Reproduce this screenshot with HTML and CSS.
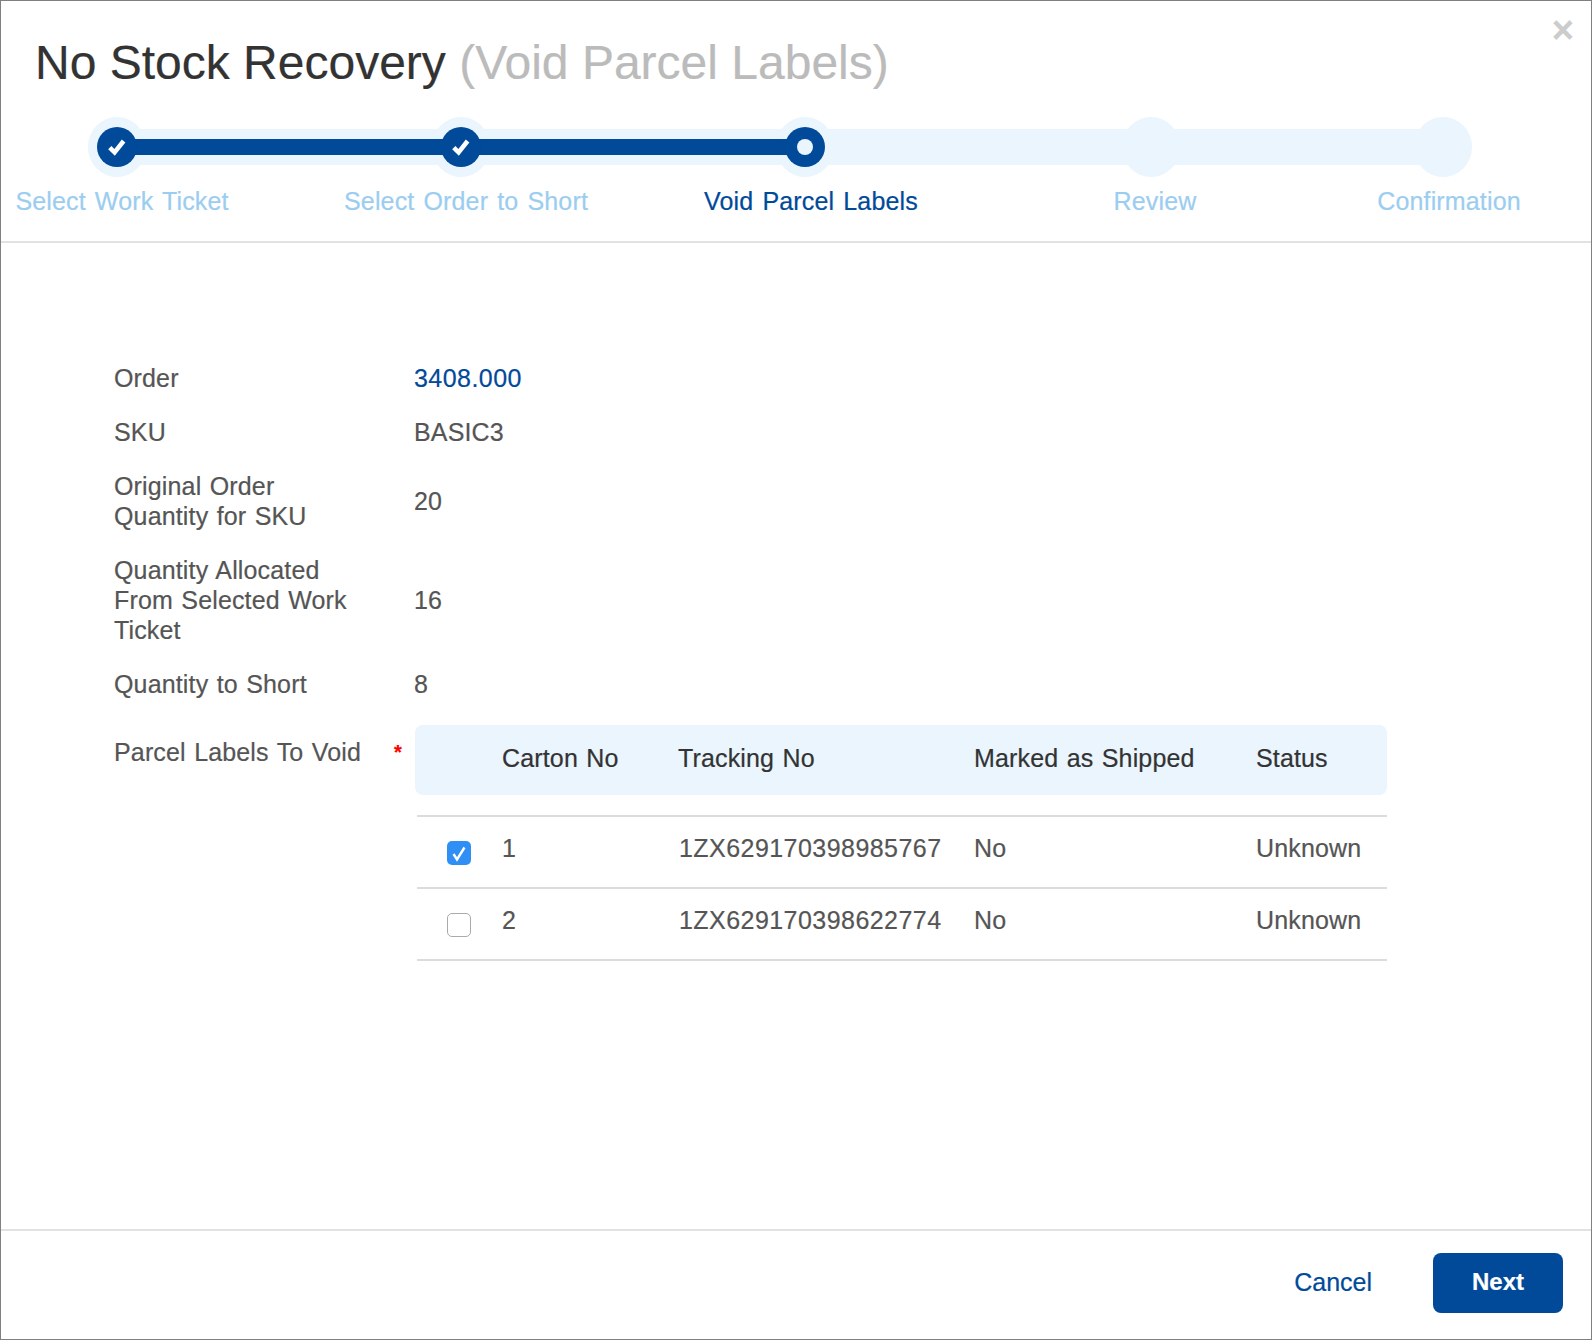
FILE: index.html
```html
<!DOCTYPE html>
<html lang="en">
<head>
<meta charset="utf-8">
<title>No Stock Recovery</title>
<link rel="stylesheet" href="styles.css">
</head>
<body>
<div class="window">
  <button class="close" aria-label="Close">×</button>
  <header class="head">
    <h1 class="title">No Stock Recovery <span class="title-sub">(Void Parcel Labels)</span></h1>
    <div class="track">
      <div class="node"><span class="dot"><svg class="tick" viewBox="0 0 20 20"><path d="M4 10.5 8 14.5 15.5 5" fill="none" stroke="#fff" stroke-width="3.8"/></svg></span></div>
      <div class="seg seg-a"><div class="seg-fill"></div></div>
      <div class="node"><span class="dot"><svg class="tick" viewBox="0 0 20 20"><path d="M4 10.5 8 14.5 15.5 5" fill="none" stroke="#fff" stroke-width="3.8"/></svg></span></div>
      <div class="seg seg-a"><div class="seg-fill"></div></div>
      <div class="node"><span class="dot"><span class="hole"></span></span></div>
      <div class="seg seg-b"></div>
      <div class="node"></div>
      <div class="seg seg-c"></div>
      <div class="node"></div>
    </div>
    <div class="step-labels">
      <span class="step-label">Select Work Ticket</span>
      <span class="step-label">Select Order to Short</span>
      <span class="step-label current">Void Parcel Labels</span>
      <span class="step-label">Review</span>
      <span class="step-label">Confirmation</span>
    </div>
  </header>
  <main class="body">
    <div class="form">
      <div class="lbl">Order</div><div class="val link num">3408.000</div>
      <div class="lbl">SKU</div><div class="val">BASIC3</div>
      <div class="lbl">Original Order<br>Quantity for SKU</div><div class="val">20</div>
      <div class="lbl">Quantity Allocated<br>From Selected Work<br>Ticket</div><div class="val">16</div>
      <div class="lbl">Quantity to Short</div><div class="val">8</div>
      <div class="lbl lbl-top">Parcel Labels To Void<span class="req">*</span></div>
      <div class="tbl">
        <div class="tr th">
          <span></span><span>Carton No</span><span>Tracking No</span><span>Marked as Shipped</span><span>Status</span>
        </div>
        <div class="tr td first">
          <span class="box on"><svg viewBox="0 0 24 24" class="box-tick"><path d="M6.5 13 10 18.5 17.5 6.5" fill="none" stroke="#fff" stroke-width="2.4"/></svg></span><span>1</span><span class="num">1ZX629170398985767</span><span>No</span><span>Unknown</span>
        </div>
        <div class="tr td">
          <span class="box"></span><span>2</span><span class="num">1ZX629170398622774</span><span>No</span><span>Unknown</span>
        </div>
      </div>
    </div>
  </main>
  <footer class="foot">
    <a class="cancel">Cancel</a>
    <button class="next">Next</button>
  </footer>
</div>
</body>
</html>
```
FILE: styles.css
```css
* { box-sizing: border-box; }
html, body { margin: 0; padding: 0; background: #fff; }
body { font-family: "Liberation Sans", Arial, sans-serif; }
.window {
  position: relative;
  width: 1592px;
  height: 1340px;
  border: 1px solid #808080;
  display: flex;
  flex-direction: column;
  overflow: hidden;
  -webkit-text-stroke: 0.2px currentColor;
}
.close {
  position: absolute;
  top: 9px;
  right: 17px;
  padding: 0;
  border: 0;
  background: none;
  color: #ccc;
  font: bold 38px/40px "Liberation Sans", Arial, sans-serif;
}
.head {
  height: 242px;
  border-bottom: 2px solid #e2e2e2;
  flex: none;
}
.title {
  margin: 0;
  padding: 34px 0 0 34px;
  height: 116px;
  font-size: 48px;
  line-height: 56px;
  font-weight: 400;
  color: #333;
}
.title-sub { color: #bbb; }
.track {
  display: flex;
  align-items: center;
  margin-left: 87px;
  height: 60px;
}
.node {
  width: 58px;
  height: 60px;
  flex: none;
  border-radius: 50%;
  background: #eaf5fe;
  display: flex;
  align-items: center;
  justify-content: center;
}
.dot {
  width: 40px;
  height: 40px;
  border-radius: 50%;
  background: #004a99;
  display: flex;
  align-items: center;
  justify-content: center;
  position: relative;
  z-index: 2;
}
.tick { width: 24px; height: 24px; }
.hole { width: 16px; height: 16px; border-radius: 50%; background: #eaf5fe; }
.seg {
  height: 36px;
  margin: 0 -12px;
  background: #eaf5fe;
  flex: none;
  display: flex;
  align-items: center;
}
.seg-a { width: 310px; }
.seg-b { width: 312px; }
.seg-c { width: 258px; }
.seg-fill {
  position: relative;
  z-index: 1;
  height: 16px;
  flex: 1;
  background: #004a99;
}
.step-labels {
  display: grid;
  grid-template-columns: 244px 444px 246px 442px 146px;
  margin: 9px 0 0 -1px;
}
.step-label {
  text-align: center;
  font-size: 25px;
  line-height: 30px;
  letter-spacing: 0.15px;
  word-spacing: 2px;
  color: #9bcdf0;
  white-space: nowrap;
}
.step-label.current { color: #004a99; }
.body { flex: 1; padding: 120px 0 0 113px; }
.form {
  display: grid;
  grid-template-columns: 300px 973px;
  row-gap: 24px;
  align-items: center;
  font-size: 25px;
  line-height: 30px;
  letter-spacing: 0.15px;
  word-spacing: 1.3px;
  color: #555;
}
.lbl { position: relative; }
.lbl-top { align-self: start; padding-top: 14px; }
.req {
  position: absolute;
  left: 280px;
  top: 14px;
  color: #f00;
  font-size: 20px;
  font-weight: 700;
}
.link { color: #004a99; }
.num { letter-spacing: 0.45px; }
.tbl { margin: 2px 0 0 1px; }
.tr {
  display: grid;
  align-items: center;
}
.th {
  height: 70px;
  padding-bottom: 4px;
  grid-template-columns: 87px 176px 296px 282px 130px;
  background: #eaf5fe;
  border-radius: 8px;
  color: #333;
}
.td {
  margin-left: 2px;
  height: 72px;
  border-bottom: 2px solid #dcdcdc;
  grid-template-columns: 85px 177px 295px 282px 130px;
  padding-bottom: 8px;
}
.first { margin-top: 20px; border-top: 2px solid #dcdcdc; height: 74px; }
.box {
  width: 24px;
  height: 24px;
  margin: 10px 0 0 30px;
  border: 1px solid #aaa;
  border-radius: 5px;
  background: #fff;
  display: block;
}
.box.on { border: 0; background: #2f8ff5; }
.box-tick { display: block; width: 24px; height: 24px; }
.foot {
  flex: none;
  height: 110px;
  border-top: 2px solid #e2e2e2;
  display: flex;
  justify-content: flex-end;
  align-items: center;
  padding: 0 28px 4px 0;
  gap: 61px;
}
.cancel { color: #004a99; font-size: 25px; margin-bottom: 2px; }
.next {
  width: 130px;
  height: 60px;
  padding: 0 0 2px;
  border: 0;
  border-radius: 8px;
  background: #004a99;
  color: #fff;
  font: bold 24px "Liberation Sans", Arial, sans-serif;
}
```
